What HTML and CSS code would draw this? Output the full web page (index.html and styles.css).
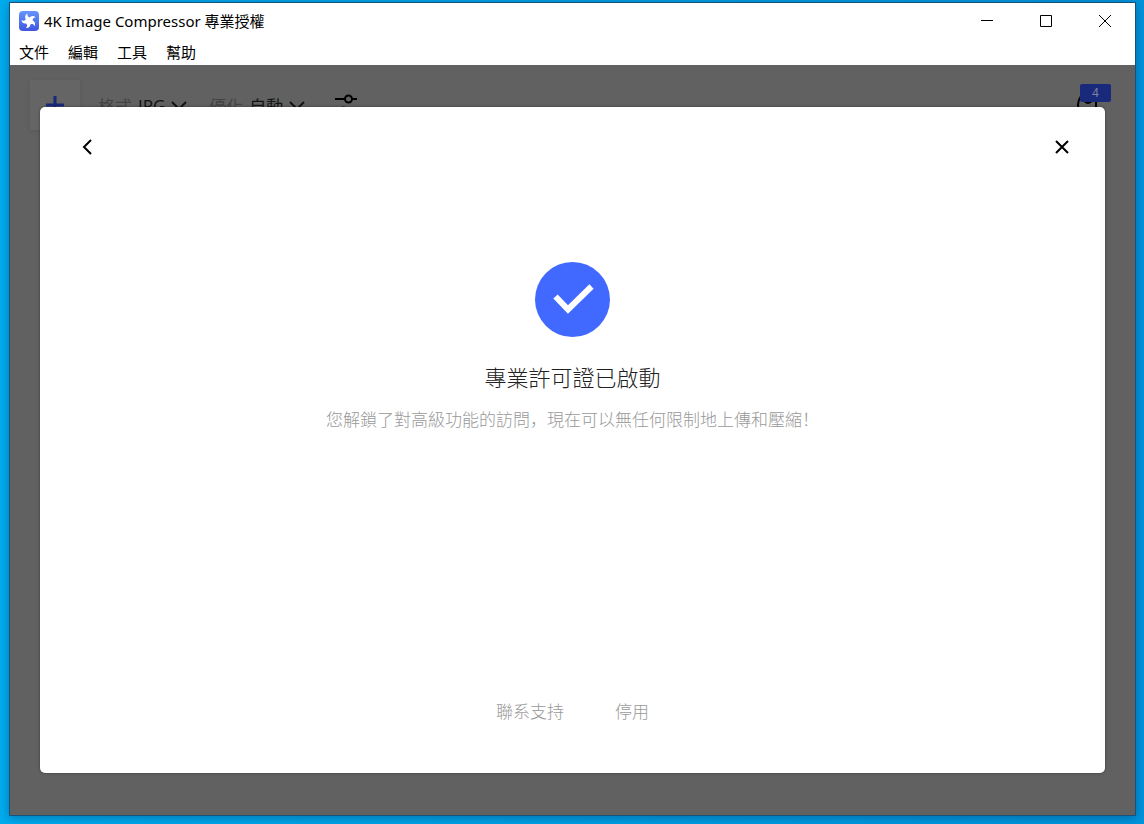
FILE: index.html
```html
<!DOCTYPE html>
<html lang="zh-Hant">
<head>
  <meta charset="UTF-8">
  <meta name="viewport" content="width=device-width, initial-scale=1.0">
  <title>4K Image Compressor 專業授權</title>
  <link rel="stylesheet" href="styles.css">
</head>
<body>
  <div class="window">
    <header class="titlebar">
      <svg class="app-icon" viewBox="0 0 20 20" aria-hidden="true">
        <defs>
          <linearGradient id="appBlue" x1="0" y1="0" x2="0" y2="1">
            <stop offset="0" stop-color="#6596fb"/>
            <stop offset="1" stop-color="#3f55df"/>
          </linearGradient>
        </defs>
        <rect width="20" height="20" rx="4" fill="url(#appBlue)"/>
        <g fill="#fff">
          <path id="blade" d="M9 10C5.500 8 5 4.500 8.500 2.500C8 5 9 6 11 6.500C12.500 7 12 9 11 10Z"/>
          <use href="#blade" transform="rotate(72 10 10)"/>
          <use href="#blade" transform="rotate(144 10 10)"/>
          <use href="#blade" transform="rotate(216 10 10)"/>
          <use href="#blade" transform="rotate(288 10 10)"/>
        </g>
      </svg>
      <span class="app-title">4K Image Compressor 專業授權</span>
      <div class="window-controls">
        <button class="window-btn" type="button" aria-label="最小化">
          <svg viewBox="0 0 14 14"><path d="M1 6.500H13"/></svg>
        </button>
        <button class="window-btn" type="button" aria-label="最大化">
          <svg viewBox="0 0 14 14"><path d="M1.500 1.500H12.500V12.500H1.500Z"/></svg>
        </button>
        <button class="window-btn" type="button" aria-label="關閉視窗">
          <svg viewBox="0 0 14 14"><path d="M1 1L13 13M13 1L1 13"/></svg>
        </button>
      </div>
    </header>

    <nav class="menu">
      <button type="button">文件</button>
      <button type="button">編輯</button>
      <button type="button">工具</button>
      <button type="button">幫助</button>
    </nav>

    <main class="workspace">
      <div class="toolbar">
        <button class="add-btn" type="button" aria-label="新增">
          <svg viewBox="0 0 18 18"><path d="M9 0V18M0 9H18"/></svg>
        </button>
        <button class="option" type="button">
          <span class="option-label">格式</span>
          <span>JPG</span>
          <svg viewBox="0 0 16 9"><path d="M1 1L8 8L15 1"/></svg>
        </button>
        <button class="option" type="button">
          <span class="option-label">優化</span>
          <span>自動</span>
          <svg viewBox="0 0 16 9"><path d="M1 1L8 8L15 1"/></svg>
        </button>
        <button class="settings-btn" type="button" aria-label="設定">
          <svg viewBox="0 0 24 24"><path d="M1 6H11M18 6H23M1 18H6M13 18H23"/><circle cx="14.500" cy="6" r="3.500"/><circle cx="9.500" cy="18" r="3.500"/></svg>
        </button>
        <button class="activity-btn" type="button" aria-label="通知">
          <svg viewBox="0 0 22 22"><path d="M5 2Q-1 11 5 20M20 5V20"/><circle cx="12" cy="5" r="4"/></svg>
          <span class="badge">4</span>
        </button>
      </div>

      <section class="modal" role="dialog" aria-labelledby="modalTitle" lang="zh-Hans">
        <div class="modal-header">
          <button class="icon-btn" type="button" aria-label="返回">
            <svg viewBox="0 0 16 16"><path d="M12 1L5 8L12 15"/></svg>
          </button>
          <button class="icon-btn" type="button" aria-label="關閉">
            <svg viewBox="0 0 16 16"><path d="M2 2L14 14M14 2L2 14"/></svg>
          </button>
        </div>
        <div class="modal-body">
          <svg class="check" viewBox="0 0 75 75" aria-hidden="true">
            <circle cx="37.500" cy="37.500" r="37.500" fill="#4169ff"/>
            <path d="M20.500 34.500L33 47.500L56.500 24.500" fill="none" stroke="#fff" stroke-width="6"/>
          </svg>
          <h1 id="modalTitle">專業許可證已啟動</h1>
          <p>您解鎖了對高級功能的訪問，現在可以無任何限制地上傳和壓縮！</p>
        </div>
        <div class="modal-footer">
          <a href="#">聯系支持</a>
          <button type="button">停用</button>
        </div>
      </section>
    </main>
  </div>
</body>
</html>
```

FILE: styles.css
```css
* {
  box-sizing: border-box;
}
body {
  margin: 0;
  min-height: 100vh;
  padding: 2px 8px 8px 9px;
  display: flex;
  background: linear-gradient(90deg, #00adef, #0095dc);
  font-family: "Noto Sans", "Noto Sans CJK TC", sans-serif;
  font-size: 15px;
  color: #000;
}
button {
  padding: 0;
  border: none;
  background: none;
  color: inherit;
  font: inherit;
  cursor: pointer;
}
svg {
  display: block;
}
button svg {
  fill: none;
  stroke: currentColor;
}
.window {
  flex: 1;
  display: flex;
  flex-direction: column;
  background-color: #fff;
  border: 1px solid #17527a;
  box-shadow: 0 2px 10px rgba(0, 40, 90, 0.4);
}

/* title bar and menu */
.titlebar {
  display: flex;
  align-items: center;
  height: 36px;
  padding-left: 9px;
}
.app-icon {
  width: 20px;
  height: 20px;
}
.app-title {
  margin-left: 5px;
  padding-bottom: 2px;
  white-space: nowrap;
}
.window-controls {
  display: flex;
  height: 100%;
  margin-left: auto;
  padding-right: 1px;
}
.window-btn {
  display: flex;
  align-items: center;
  justify-content: center;
  width: 59px;
}
.window-btn svg {
  width: 14px;
  height: 14px;
}
.menu {
  display: flex;
  align-items: center;
  gap: 19px;
  height: 26px;
  padding: 0 9px 2px;
}

/* dimmed workspace */
.workspace {
  position: relative;
  flex: 1;
  background-color: #616161;
}
.toolbar {
  display: flex;
  align-items: flex-start;
  padding: 15px 24px 0 20px;
  height: 66px;
}
.add-btn {
  display: flex;
  align-items: center;
  justify-content: center;
  width: 50px;
  height: 50px;
  margin-right: 18px;
  background-color: #656565;
  box-shadow: 0 1px 4px rgba(0, 0, 0, 0.1);
  color: #19297b;
}
.add-btn svg {
  width: 18px;
  height: 18px;
  stroke-width: 3;
}
.option {
  display: flex;
  align-items: center;
  gap: 6px;
  height: 50px;
  margin-right: 22px;
  font-size: 17px;
  color: #141414;
}
.option svg {
  width: 16px;
  height: 9px;
  stroke-width: 2;
}
.option-label {
  color: #444;
}
.settings-btn {
  height: 50px;
  margin-left: 7px;
}
.settings-btn svg {
  width: 24px;
  height: 24px;
  stroke-width: 2;
}
.activity-btn {
  position: relative;
  height: 50px;
  margin-left: auto;
  padding-right: 13px;
}
.activity-btn svg {
  width: 22px;
  height: 22px;
  stroke-width: 2;
}
.badge {
  position: absolute;
  top: 4px;
  right: 0;
  width: 31px;
  border-radius: 2px;
  background-color: #19297b;
  color: #7d849f;
  font-size: 12px;
  line-height: 18px;
}

/* licence dialog */
.modal {
  position: absolute;
  inset: 42px 30px;
  display: flex;
  flex-direction: column;
  background-color: #fff;
  border-radius: 5px;
  box-shadow: 0 0 3px rgba(0, 0, 0, 0.4);
  font-family: "Noto Sans CJK SC", sans-serif;
  font-size: 17px;
  font-weight: 300;
  line-height: 24px;
}
.modal-header {
  display: flex;
  justify-content: space-between;
  padding: 32px 35px 0 39px;
}
.icon-btn svg {
  width: 16px;
  height: 16px;
  stroke-width: 2;
}
.modal-body {
  flex: 1;
  display: flex;
  flex-direction: column;
  align-items: center;
  padding-top: 107px;
  text-align: center;
}
.check {
  width: 75px;
  height: 75px;
}
.modal h1 {
  margin: 23px 0 15px;
  font-size: 22px;
  font-weight: 300;
  line-height: 32px;
  color: #222;
}
.modal p {
  margin: 0;
  color: #999;
}
.modal-footer {
  display: flex;
  justify-content: center;
  gap: 51px;
  padding-bottom: 50px;
  color: #999;
}
.modal-footer a {
  color: inherit;
  text-decoration: none;
}
```
